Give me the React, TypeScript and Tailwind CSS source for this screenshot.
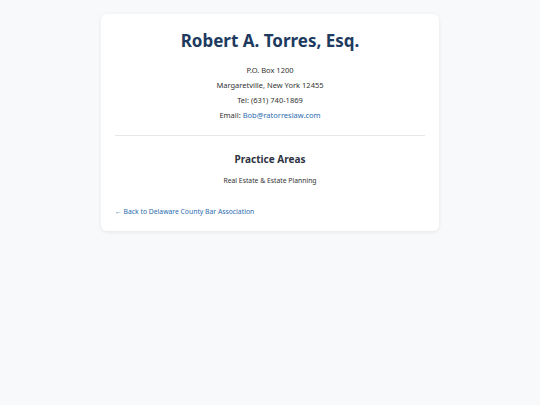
export default function App() {
  return (
    <div className="min-h-[405px] w-full bg-[#f8f9fb] pt-[14px]" style={{ fontFamily: '"Noto Sans", "Open Sans", sans-serif' }}>
      <div className="mx-auto w-[338px] rounded-[6px] bg-white px-[14px] pt-[14px] pb-[13px] shadow-[0_1px_4px_rgba(0,0,0,0.08)]">
        <h1 className="text-center text-[17px] font-bold leading-[26px] text-[#1e3a5f]">Robert A. Torres, Esq.</h1>
        <div className="mt-[9px] text-center text-[7.5px] leading-[15px] text-[#333333]">
          <p>P.O. Box 1200</p>
          <p>Margaretville, New York 12455</p>
          <p>Tel: (631) 740-1869</p>
          <p>Email: <span className="text-[#2b6cb0]">Bob@ratorreslaw.com</span></p>
        </div>
        <div className="mt-[12px] h-px bg-[#e5e7eb]" />
        <h2 className="mt-[15px] text-center text-[10px] font-bold leading-[16px] text-[#2d3342]">Practice Areas</h2>
        <p className="mt-[8px] text-center text-[6.8px] leading-[12px] text-[#333333]">Real Estate &amp; Estate Planning</p>
        <p className="mt-[19px] text-[6.8px] leading-[12px] text-[#2b6cb0]">← Back to Delaware County Bar Association</p>
      </div>
    </div>
  );
}
